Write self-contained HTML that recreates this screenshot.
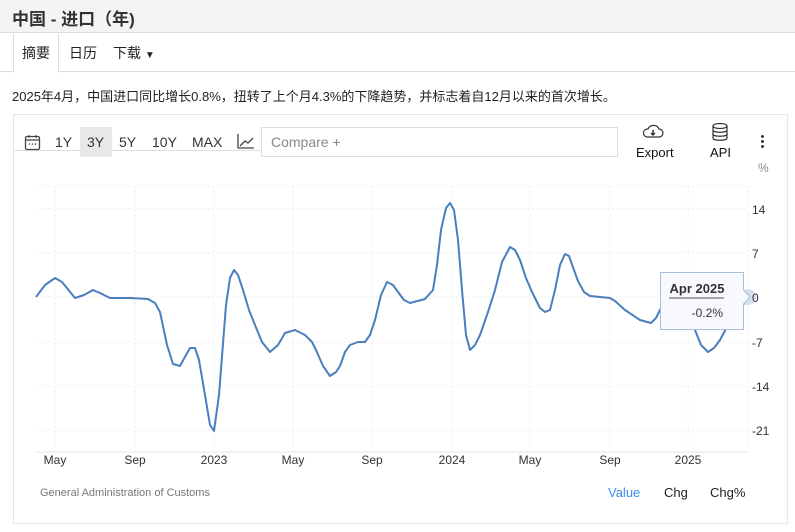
<!DOCTYPE html>
<html><head><meta charset="utf-8"><style>
*{margin:0;padding:0;box-sizing:border-box}
body{width:795px;height:532px;background:#fff;font-family:"Liberation Sans","Noto Sans CJK SC",sans-serif;color:#222;position:relative;overflow:hidden}
.a{position:absolute}
.p{position:absolute;top:134px;font-size:14px;color:#333}
</style></head><body>
<div class="a" style="left:0;top:0;width:795px;height:33px;background:#f4f4f4;border-bottom:1px solid #ddd"></div>
<div class="a" style="left:12px;top:5px;font-size:17px;font-weight:bold;color:#333">中国 - 进口（年)</div>
<div class="a" style="left:0;top:71px;width:795px;height:1px;background:#ddd"></div>
<div class="a" style="left:13px;top:34px;width:46px;height:39px;background:#fff;border:1px solid #ddd;border-top:none;border-bottom:none"></div>
<div class="a" style="left:22px;top:43px;font-size:14px">摘要</div>
<div class="a" style="left:69px;top:43px;font-size:14px">日历</div>
<div class="a" style="left:113px;top:43px;font-size:14px">下载 <span style="font-size:10px">▼</span></div>
<div class="a" style="left:12px;top:86px;font-size:13px;color:#222">2025年4月，中国进口同比增长0.8%，扭转了上个月4.3%的下降趋势，并标志着自12月以来的首次增长。</div>
<div class="a" style="left:13px;top:114px;width:775px;height:410px;border:1px solid #e6e6e6"></div>
<div class="a" style="left:13px;top:114px;width:369px;height:37px;border-bottom:1px solid #ddd"></div>
<svg class="a" style="left:24px;top:134px" width="17" height="17" viewBox="0 0 17 17"><rect x="1.5" y="2.5" width="14" height="13" rx="1.5" fill="none" stroke="#444" stroke-width="1.3"/><line x1="1.5" y1="6" x2="15.5" y2="6" stroke="#444" stroke-width="1.3"/><line x1="5" y1="1" x2="5" y2="4" stroke="#444"/><line x1="12" y1="1" x2="12" y2="4" stroke="#444"/><circle cx="5.5" cy="10" r=".8" fill="#444"/><circle cx="8.5" cy="10" r=".8" fill="#444"/><circle cx="11.5" cy="10" r=".8" fill="#444"/></svg>
<div class="a" style="left:80px;top:127px;width:32px;height:30px;background:#e8e8e8"></div>
<div class="p" style="left:55px">1Y</div><div class="p" style="left:87px">3Y</div><div class="p" style="left:119px">5Y</div><div class="p" style="left:152px">10Y</div><div class="p" style="left:192px">MAX</div>
<svg class="a" style="left:237px;top:133px" width="18" height="17"><path d="M1 1V15H17" fill="none" stroke="#444" stroke-width="1.3"/><path d="M3 13L8 8L11 10L16 5" fill="none" stroke="#444" stroke-width="1.3"/></svg>
<div class="a" style="left:261px;top:127px;width:357px;height:30px;border:1px solid #ddd;background:#fff"></div>
<div class="a" style="left:271px;top:134px;font-size:14px;color:#888">Compare +</div>
<svg class="a" style="left:641px;top:123px" width="24" height="16"><path d="M6 14H18A4 4 0 0 0 18 6A6 6 0 0 0 7 6A4 4 0 0 0 6 14Z" fill="none" stroke="#333" stroke-width="1.2"/><path d="M12 7V12M10 10L12 12L14 10" fill="none" stroke="#333" stroke-width="1.5"/></svg>
<div class="a" style="left:636px;top:145px;font-size:13px;color:#111">Export</div>
<svg class="a" style="left:711px;top:122px" width="18" height="20"><ellipse cx="9" cy="4" rx="7" ry="2.5" fill="none" stroke="#333" stroke-width="1.2"/><path d="M2 4V16C2 19 16 19 16 16V4M2 8C2 11 16 11 16 8M2 12C2 15 16 15 16 12" fill="none" stroke="#333" stroke-width="1.2"/></svg>
<div class="a" style="left:710px;top:145px;font-size:13px;color:#111">API</div>
<div class="a" style="left:761px;top:134px;width:3px;height:14px;background:radial-gradient(circle,#333 1.3px,transparent 1.6px) 0 0/3px 5px"></div>
<div class="a" style="left:758px;top:161px;font-size:12px;color:#888">%</div>
<svg class="a" style="left:0;top:0" width="795" height="532">
<g stroke="#eee" stroke-dasharray="2,2" stroke-width="1">
<line x1="36" y1="186" x2="748" y2="186"/><line x1="36" y1="209" x2="748" y2="209"/><line x1="36" y1="253" x2="748" y2="253"/><line x1="36" y1="297" x2="748" y2="297"/><line x1="36" y1="342" x2="748" y2="342"/><line x1="36" y1="386" x2="748" y2="386"/><line x1="36" y1="430" x2="748" y2="430"/>
<line x1="55" y1="186" x2="55" y2="452"/><line x1="135" y1="186" x2="135" y2="452"/><line x1="214" y1="186" x2="214" y2="452"/><line x1="293" y1="186" x2="293" y2="452"/><line x1="372" y1="186" x2="372" y2="452"/><line x1="452" y1="186" x2="452" y2="452"/><line x1="530" y1="186" x2="530" y2="452"/><line x1="610" y1="186" x2="610" y2="452"/><line x1="688" y1="186" x2="688" y2="452"/><line x1="748" y1="186" x2="748" y2="452"/>
</g>
<line x1="36" y1="452" x2="748" y2="452" stroke="#e6e6e6"/>
<polyline fill="none" stroke="#4a7ebf" stroke-width="2" stroke-linejoin="round" points="36,297 45,285 55,278 62,282 75,298 84,295 93,290 100,293 110,298 130,298 148,299 155,303 160,312 167,345 173,364 180,366 186,355 190,348 195,348 199,360 205,395 210,425 214,431 219,395 226,305 230,278 234,270 238,275 243,290 249,310 255,325 262,342 270,352 278,345 285,333 295,330 305,335 312,342 316,350 323,366 330,376 336,372 340,366 345,352 350,345 358,342 365,342 370,335 375,320 381,295 387,282 393,285 398,292 404,300 410,303 425,299 433,290 437,265 441,230 446,208 450,203 454,210 458,240 462,290 466,335 470,350 475,345 480,335 488,312 495,290 502,262 510,247 515,250 520,260 526,278 532,292 540,308 545,312 550,310 555,290 560,265 565,254 569,256 574,270 578,281 584,292 590,296 610,298 615,301 625,310 640,320 651,323 656,318 660,310 665,300 672,295 680,298 688,315 695,330 701,345 708,352 714,348 720,340 728,325 735,315 743,305 748,297"/>
<circle cx="748" cy="297" r="8" fill="#c9d8ef" opacity=".8"/>
<g font-size="12" fill="#333" font-family="Liberation Sans,sans-serif">
<text x="752" y="214">14</text><text x="752" y="258">7</text><text x="752" y="302">0</text><text x="752" y="347">-7</text><text x="752" y="391">-14</text><text x="752" y="435">-21</text>
<g text-anchor="middle"><text x="55" y="464">May</text><text x="135" y="464">Sep</text><text x="214" y="464">2023</text><text x="293" y="464">May</text><text x="372" y="464">Sep</text><text x="452" y="464">2024</text><text x="530" y="464">May</text><text x="610" y="464">Sep</text><text x="688" y="464">2025</text></g>
</g>
<path d="M660.5 272.5H743.5V290L750 297L743.5 304V329.5H660.5Z" fill="#f7f9fc" stroke="#a8bfdc"/>
<text x="697" y="293" text-anchor="middle" font-size="13" font-weight="bold" fill="#333" font-family="Liberation Sans,sans-serif">Apr 2025</text>
<line x1="669" y1="298" x2="724" y2="298" stroke="#555"/>
<text x="723" y="317" text-anchor="end" font-size="12" fill="#333" font-family="Liberation Sans,sans-serif">-0.2%</text>
</svg>
<div class="a" style="left:40px;top:487px;font-size:11px;color:#777">General Administration of Customs</div>
<div class="a" style="left:608px;top:485px;font-size:13px;color:#3a8ee6">Value</div>
<div class="a" style="left:664px;top:485px;font-size:13px;color:#222">Chg</div>
<div class="a" style="left:710px;top:485px;font-size:13px;color:#222">Chg%</div>
</body></html>
